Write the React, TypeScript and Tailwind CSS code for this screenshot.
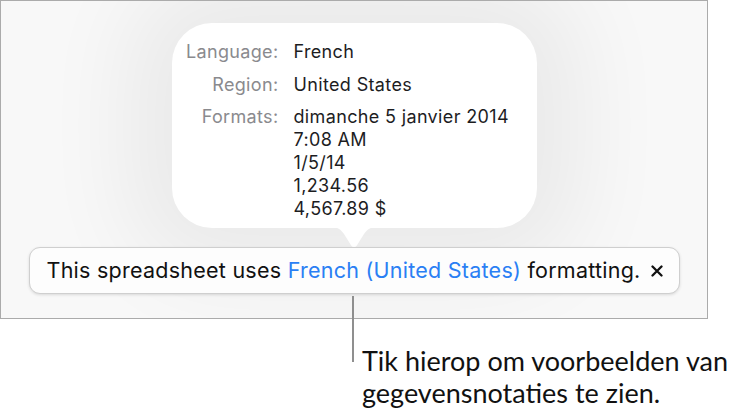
import React from 'react';

const formats = ['dimanche 5 janvier 2014', '7:08 AM', '1/5/14', '1,234.56', '4,567.89 $'];

function Row({ label, children }: { label: string; children: React.ReactNode }) {
  return (
    <>
      <div className="text-right text-[#8a8a8e]">{label}</div>
      <div className="text-[#1d1d1f]">{children}</div>
    </>
  );
}

export default function App() {
  return (
    <div className="relative w-[753px] h-[415px] bg-white font-[Inter,sans-serif]">
      <div className="w-[708px] h-[319px] border border-[#ababab] bg-[#f8f8f8] flex flex-col items-center pt-[22px] overflow-hidden">
        <div className="flex flex-col items-center">
          <div className="w-[365px] h-[205px] rounded-[40px] bg-white shadow-[0_0_90px_45px_rgba(0,0,0,0.06)] pt-[17px]">
            <div className="grid grid-cols-[107px_auto] gap-x-[15px] gap-y-[9.5px] text-[18px] leading-[23px] tracking-[0.35px]">
              <Row label="Language:">French</Row>
              <Row label="Region:">United States</Row>
              <Row label="Formats:">
                {formats.map(f => (
                  <div key={f}>{f}</div>
                ))}
              </Row>
            </div>
          </div>
          <svg width="44" height="21" viewBox="0 0 44 21" className="-mt-px">
            <path d="M0 0 H44 C38 0 35 3 32 7 L24.5 19 Q22 21.5 19.5 19 L12 7 C9 3 6 0 0 0 Z" fill="#ffffff" />
          </svg>
        </div>
        <div className="w-[651px] h-[47px] -mt-px rounded-[11px] border border-[#cfcfcf] bg-[#fdfdfd] shadow-[0_1px_3px_rgba(0,0,0,0.12)] flex items-center pl-[17px] pr-[16px] text-[21.5px] text-[#111]">
          <span className="flex-1 tracking-[0.25px] whitespace-nowrap">
            This spreadsheet uses <span className="text-[#2a7ff4]">French (United States)</span> formatting.
          </span>
          <svg width="12" height="12" viewBox="0 0 12 12" className="shrink-0">
            <path d="M1.5 1.5 L10.5 10.5 M10.5 1.5 L1.5 10.5" stroke="#111" strokeWidth="2.3" strokeLinecap="round" />
          </svg>
        </div>
      </div>
      <div className="absolute left-[352px] top-[296px] w-[2px] h-[66px] bg-[#8f8f8f]" />
      <div className="pl-[362px] pt-[26px] text-[27px] leading-[32px] text-[#111] font-[Lato,sans-serif] whitespace-nowrap">
        <div>Tik hierop om voorbeelden van</div>
        <div>gegevensnotaties te zien.</div>
      </div>
    </div>
  );
}
